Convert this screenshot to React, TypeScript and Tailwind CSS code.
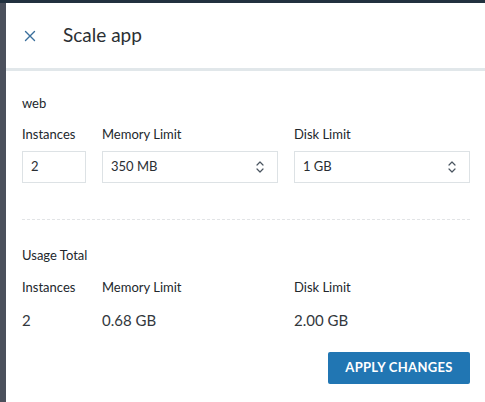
import React from 'react';

const cols = 'grid grid-cols-[64px_176px_176px] gap-x-4';

function Chevrons() {
  return (
    <svg width="10" height="14" viewBox="0 0 10 14" fill="none" stroke="#4a5560" strokeWidth="1.2" strokeLinecap="round" strokeLinejoin="round">
      <path d="M2 5 L5 2 L8 5" />
      <path d="M2 9 L5 12 L8 9" />
    </svg>
  );
}

function SelectBox({ value }: { value: string }) {
  return (
    <div className="h-[32px] border border-[#dde2e5] flex items-center justify-between pl-[8px] pr-[12px] text-[13px] text-[#2a2e33]">
      <span>{value}</span>
      <Chevrons />
    </div>
  );
}

export default function App() {
  return (
    <div className="w-[485px] h-[402px] bg-white flex flex-col overflow-hidden font-['Lato',sans-serif] text-[#22272c]">
      <div className="h-[3px] bg-[#22313f]" />
      <div className="flex flex-1">
        <div className="w-[6px] bg-[#4b505c]" />
        <div className="flex-1 flex flex-col">
          {/* Header */}
          <div className="h-[65px] flex items-center pl-[18px]">
            <svg width="12" height="12" viewBox="0 0 12 12" stroke="#3a6f9c" strokeWidth="1.4" strokeLinecap="round">
              <path d="M1.5 1.5 L10.5 10.5 M10.5 1.5 L1.5 10.5" />
            </svg>
            <h1 className="ml-[27px] text-[19px] text-[#2b2f33]">Scale app</h1>
          </div>
          <div className="h-[3px] bg-[#e1e7ea]" />

          <div className="pl-[16px] pr-[15px]">
            <div className="mt-[23px] text-[13px] leading-[18px]">web</div>

            <div className={`${cols} mt-[13px] text-[13px] leading-[18px]`}>
              <span>Instances</span>
              <span>Memory Limit</span>
              <span>Disk Limit</span>
            </div>

            <div className={`${cols} mt-[8px]`}>
              <div className="h-[32px] border border-[#dde2e5] flex items-center pl-[8px] text-[13px] text-[#2a2e33]">2</div>
              <SelectBox value="350 MB" />
              <SelectBox value="1 GB" />
            </div>

            <div className="mt-[36px] border-t border-dashed border-[#e2e4e6]" />

            <div className="mt-[26px] text-[13px] leading-[18px]">Usage Total</div>

            <div className={`${cols} mt-[14px] text-[13px] leading-[18px]`}>
              <span>Instances</span>
              <span>Memory Limit</span>
              <span>Disk Limit</span>
            </div>

            <div className={`${cols} mt-[14px] text-[15px] leading-[20px] text-[#33383d]`}>
              <span>2</span>
              <span>0.68 GB</span>
              <span>2.00 GB</span>
            </div>

            <div className="flex justify-end mt-[22px]">
              <button className="h-[32px] w-[142px] bg-[#2176b3] rounded-[2px] text-white text-[13px] font-bold tracking-[0.3px]">
                APPLY CHANGES
              </button>
            </div>
          </div>
        </div>
      </div>
    </div>
  );
}
